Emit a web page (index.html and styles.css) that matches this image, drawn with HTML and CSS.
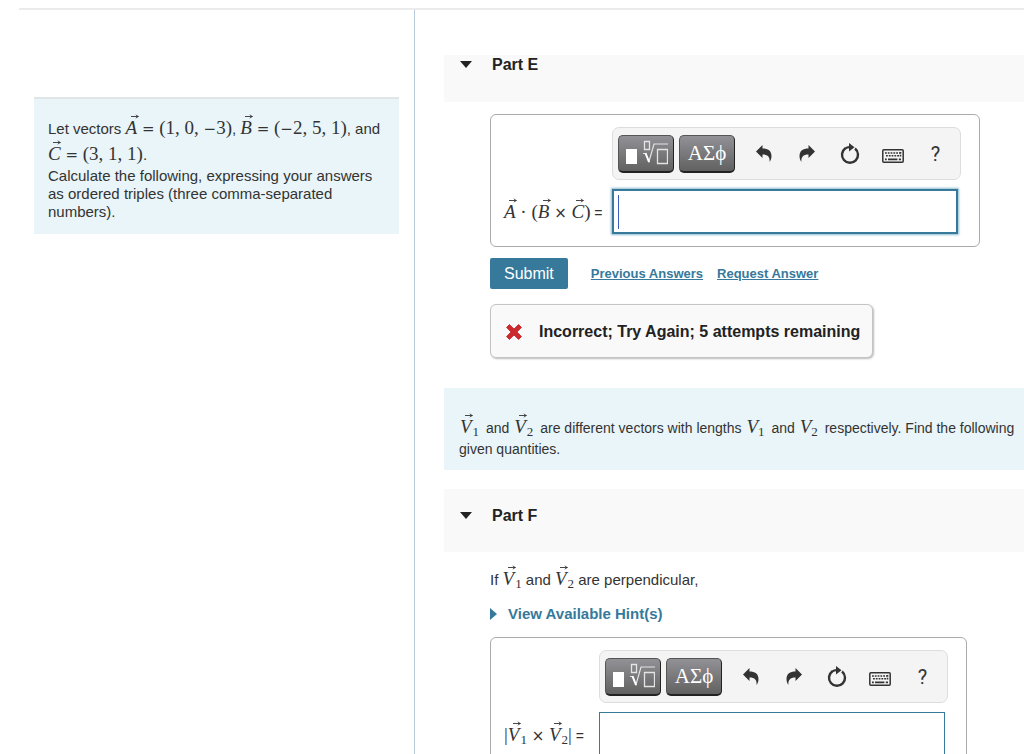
FILE: index.html
```html
<!DOCTYPE html>
<html lang="en">

<head>
    <meta charset="UTF-8">
    <title>Vector Products</title>
    <link rel="stylesheet" href="styles.css">
</head>

<body>
    <!-- shared icons -->
    <svg class="icon-defs" aria-hidden="true">
        <symbol id="arrow" viewBox="0 0 8 5">
            <path d="M0 2.5H7M5 .7Q5.6 2.2 7.5 2.5Q5.6 2.8 5 4.3" fill="none" stroke="currentColor" stroke-width=".9" />
        </symbol>
        <symbol id="templates" viewBox="0 0 44 26">
            <path d="M2 9H13V24H2Z" fill="#fff" />
            <path d="M20.5 1.5H25.5V9.5H20.5ZM33.5 9.5H43.5V23.5H33.5Z" fill="none" stroke="#e4e4e4" stroke-width="1.3" />
            <path d="M19 13.5H21.5L25 21.5L30 4H44" fill="none" stroke="#e4e4e4" stroke-width="1.2" />
            <path d="M21.5 13L25 22" stroke="#fff" stroke-width="2" />
        </symbol>
        <symbol id="undo" viewBox="0 0 16 17">
            <path d="M0 6.5L6.5 0V3.6C12 3.6 15.5 6 15.5 11C15.5 13.5 14.6 15.5 13.6 17C14 12 12 9.4 6.5 9.4V13Z" fill="#333" />
        </symbol>
        <symbol id="reset" viewBox="0 0 20 22">
            <path d="M5.4 5.2A8 8 0 1 0 15 5.5" fill="none" stroke="#333" stroke-width="2.4" />
            <path d="M9 0L14.5 4.3L9 8.4Z" fill="#333" />
            <path d="M5 5.6Q7.5 4 10 4.2" fill="none" stroke="#333" stroke-width="2.2" />
        </symbol>
        <symbol id="keyboard" viewBox="0 0 22 14">
            <rect x=".8" y=".8" width="20.4" height="12.4" rx="1" fill="none" stroke="#333" stroke-width="1.5" />
            <path d="M3 4H18M4 6.8H17M18.5 3V7.6" fill="none" stroke="#333" stroke-width="1.6" stroke-dasharray="1.8 1" />
            <path d="M3 10.4H4.8M6 10.4H15.4M16.8 10.4H19" fill="none" stroke="#333" stroke-width="1.7" />
        </symbol>
        <symbol id="cross" viewBox="0 0 16 16">
            <path d="M3.4 .6L8 5.1L12.6 .6L15.4 3.4L10.9 8L15.4 12.6L12.6 15.4L8 10.9L3.4 15.4L.6 12.6L5.1 8L.6 3.4Z" fill="#cb2a2e" stroke="#cb2a2e" stroke-linejoin="round" />
        </symbol>
    </svg>

    <div class="page">
        <aside class="sidebar">
            <div class="problem">
                Let vectors <span class="math"><span class="vec"><i>A</i><svg><use href="#arrow" /></svg></span> <span class="op">=</span> (1, 0, <span class="op">−</span>3)</span>,
                <span class="math"><span class="vec"><i>B</i><svg><use href="#arrow" /></svg></span> <span class="op">=</span> (<span class="op">−</span>2, 5, 1)</span>, and<br>
                <span class="math"><span class="vec"><i>C</i><svg><use href="#arrow" /></svg></span> <span class="op">=</span> (3, 1, 1)</span>.<br>
                Calculate the following, expressing your answers as ordered triples (three comma-separated numbers).
            </div>
        </aside>

        <main class="content">
            <section>
                <header class="part-header part-header-short">
                    <span class="caret-down"></span>
                    <h2>Part E</h2>
                </header>
                <form class="part-body">
                    <div class="answer-box answer-box-wide">
                        <div class="toolbar">
                            <button type="button" class="dark" aria-label="Templates"><svg width="44" height="26"><use href="#templates" /></svg></button>
                            <button type="button" class="dark">ΑΣϕ</button>
                            <button type="button" class="tool" aria-label="Undo"><svg width="16" height="17"><use href="#undo" /></svg></button>
                            <button type="button" class="tool" aria-label="Redo"><svg class="flip" width="16" height="17"><use href="#undo" /></svg></button>
                            <button type="button" class="tool" aria-label="Reset"><svg width="20" height="22"><use href="#reset" /></svg></button>
                            <button type="button" class="tool" aria-label="Keyboard"><svg class="low" width="22" height="14"><use href="#keyboard" /></svg></button>
                            <button type="button" class="tool help">?</button>
                        </div>
                        <label for="answer-e"><span class="math"><span class="vec"><i>A</i><svg><use href="#arrow" /></svg></span> · (<span class="vec"><i>B</i><svg><use href="#arrow" /></svg></span> <span class="op">×</span> <span class="vec"><i>C</i><svg><use href="#arrow" /></svg></span>)</span> =</label>
                        <input type="text" id="answer-e" class="active">
                    </div>
                    <div class="actions">
                        <button type="submit" class="submit">Submit</button>
                        <a href="#">Previous Answers</a>
                        <a href="#">Request Answer</a>
                    </div>
                    <div class="feedback">
                        <svg width="16" height="16"><use href="#cross" /></svg>
                        <span>Incorrect; Try Again; 5 attempts remaining</span>
                    </div>
                </form>
            </section>

            <div class="intro">
                <span class="math"><span class="vec"><i>V</i><svg><use href="#arrow" /></svg></span><sub>1</sub></span> and
                <span class="math"><span class="vec"><i>V</i><svg><use href="#arrow" /></svg></span><sub>2</sub></span> are different vectors with lengths
                <span class="math"><i>V</i><sub>1</sub></span> and <span class="math"><i>V</i><sub>2</sub></span> respectively. Find the following<br>
                given quantities.
            </div>

            <section>
                <header class="part-header">
                    <span class="caret-down"></span>
                    <h2>Part F</h2>
                </header>
                <form class="part-body">
                    <p class="question">If <span class="math"><span class="vec"><i>V</i><svg><use href="#arrow" /></svg></span><sub>1</sub></span> and
                        <span class="math"><span class="vec"><i>V</i><svg><use href="#arrow" /></svg></span><sub>2</sub></span> are perpendicular,</p>
                    <a href="#" class="hints">View Available Hint(s)</a>
                    <div class="answer-box">
                        <div class="toolbar">
                            <button type="button" class="dark" aria-label="Templates"><svg width="44" height="26"><use href="#templates" /></svg></button>
                            <button type="button" class="dark">ΑΣϕ</button>
                            <button type="button" class="tool" aria-label="Undo"><svg width="16" height="17"><use href="#undo" /></svg></button>
                            <button type="button" class="tool" aria-label="Redo"><svg class="flip" width="16" height="17"><use href="#undo" /></svg></button>
                            <button type="button" class="tool" aria-label="Reset"><svg width="20" height="22"><use href="#reset" /></svg></button>
                            <button type="button" class="tool" aria-label="Keyboard"><svg class="low" width="22" height="14"><use href="#keyboard" /></svg></button>
                            <button type="button" class="tool help">?</button>
                        </div>
                        <label for="answer-f"><span class="math">|<span class="vec"><i>V</i><svg><use href="#arrow" /></svg></span><sub>1</sub> <span class="op">×</span> <span class="vec"><i>V</i><svg><use href="#arrow" /></svg></span><sub>2</sub>|</span> =</label>
                        <input type="text" id="answer-f">
                    </div>
                </form>
            </section>
        </main>
    </div>
</body>

</html>
```

FILE: styles.css
```css
* {
    box-sizing: border-box;
}

body {
    margin: 0;
    padding: 8px 0 0 19px;
    height: 100vh;
    overflow: hidden;
    background-color: #fff;
    color: #333;
    font-family: "Liberation Sans", Arial, sans-serif;
    font-size: 15px;
    line-height: 18px;
}

.icon-defs {
    display: none;
}

.page {
    display: grid;
    grid-template-columns: 396px 1fr;
    height: 100%;
    border-top: 2px solid #ebebeb;
}

.sidebar {
    padding: 87px 15px 0;
    border-right: 1px solid #b7c9da;
}

.problem {
    padding: 16px 14px 13px;
    border-top: 2px solid #e0e5e6;
    background-color: #e9f5f8;
}

/* math text */
.math {
    font-family: "Liberation Serif", "Times New Roman", serif;
    font-size: 19px;
    line-height: 26px;
    white-space: nowrap;
}

.math sub {
    font-size: 13px;
    line-height: 0;
    vertical-align: -3px;
}

.op {
    font-family: "DejaVu Sans", sans-serif;
    font-size: 15px;
    line-height: 1;
}

.vec {
    position: relative;
}

.vec + sub {
    margin-left: 1px;
}

.vec svg {
    position: absolute;
    top: -3px;
    left: 5px;
    width: 8px;
    height: 5px;
}

.content {
    min-width: 0;
    padding: 45px 0 0 29px;
}

.part-header {
    display: flex;
    align-items: center;
    height: 63px;
    padding: 0 16px;
    margin-bottom: 14px;
    background-color: #f9f9f9;
    color: #222;
}

.part-header-short {
    align-items: flex-start;
    height: 47px;
    margin-bottom: 12px;
}

.part-header h2 {
    margin: 0 0 10px;
    font-size: 16px;
    line-height: 20px;
}

.caret-down {
    margin: 6px 20px 16px 0;
    border: 6px solid transparent;
    border-top: 7px solid #222;
    border-bottom: 0;
}

.part-body {
    padding-left: 46px;
}

.answer-box {
    display: grid;
    grid-template-columns: 95px 349px;
    row-gap: 9px;
    width: fit-content;
    padding: 12px 18px 12px 13px;
    border: 1px solid #aaa;
    border-radius: 6px;
}

.answer-box-wide {
    grid-template-columns: 108px 349px;
}

.answer-box label {
    align-self: center;
    font-size: 14px;
    white-space: nowrap;
}

.answer-box input {
    width: 346px;
    height: 45px;
    border: 1px solid #36799b;
    outline: none;
    background-color: #fff;
    font-size: 18px;
}

.answer-box input.active {
    border: 2px solid #36799b;
    box-shadow: 0 0 2px 1px #8fbccf;
    background: linear-gradient(#3a5fc0, #3a5fc0) 4px center / 1px 34px no-repeat #fff;
}

.toolbar {
    grid-column: 2;
    display: flex;
    align-items: center;
    height: 53px;
    padding: 0 5px;
    border: 1px solid #ddd;
    border-radius: 7px;
    background-color: #f4f4f4;
}

.dark {
    display: flex;
    flex-shrink: 0;
    align-items: center;
    justify-content: center;
    width: 56px;
    height: 38px;
    margin-right: 5px;
    padding: 0;
    border: 1px solid #555;
    border-right-color: #222;
    border-bottom: 2px solid #222;
    border-radius: 5px;
    background: linear-gradient(#929196, #616161);
    color: #fff;
    font-family: "Liberation Serif", "Times New Roman", serif;
    font-size: 21px;
}

.tool {
    display: flex;
    flex-shrink: 0;
    align-items: center;
    justify-content: center;
    width: 43px;
    padding: 0;
    border: 0;
    background: none;
    color: #333;
}

.dark + .tool {
    margin-left: 2px;
}

.flip {
    transform: scaleX(-1);
}

.low {
    margin-top: 4px;
}

.help {
    font-family: Roboto, sans-serif;
    font-size: 20px;
}

.actions {
    display: flex;
    align-items: center;
    margin: 11px 0 15px;
}

.actions a {
    margin-right: 14px;
    color: #36799b;
    font-size: 13px;
    font-weight: bold;
}

.submit {
    height: 31px;
    margin-right: 23px;
    padding: 0 14px;
    border: 0;
    border-radius: 2px;
    background-color: #36799b;
    color: #fff;
    font-family: inherit;
    font-size: 16px;
}

.feedback {
    display: flex;
    align-items: center;
    gap: 17px;
    width: fit-content;
    height: 54px;
    padding: 2px 12px 0 15px;
    border: 1px solid #c4c4c4;
    border-radius: 6px;
    box-shadow: 1px 1px 2px #bbb;
    background-color: #f9f9f9;
    color: #222;
    font-size: 16px;
    font-weight: bold;
}

.intro {
    margin: 30px 0 19px;
    padding: 26px 15px 12px;
    background-color: #e9f5f8;
    font-size: 14px;
    white-space: nowrap;
}

.intro .math {
    margin: 0 3px 0 1px;
}

.question {
    margin: 0;
}

.hints {
    display: flex;
    align-items: center;
    margin: 13px 0 14px;
    color: #36799b;
    font-weight: bold;
    text-decoration: none;
}

.hints::before {
    content: "";
    margin-right: 11px;
    border: 6px solid transparent;
    border-left: 7px solid #36799b;
    border-right: 0;
}
```
